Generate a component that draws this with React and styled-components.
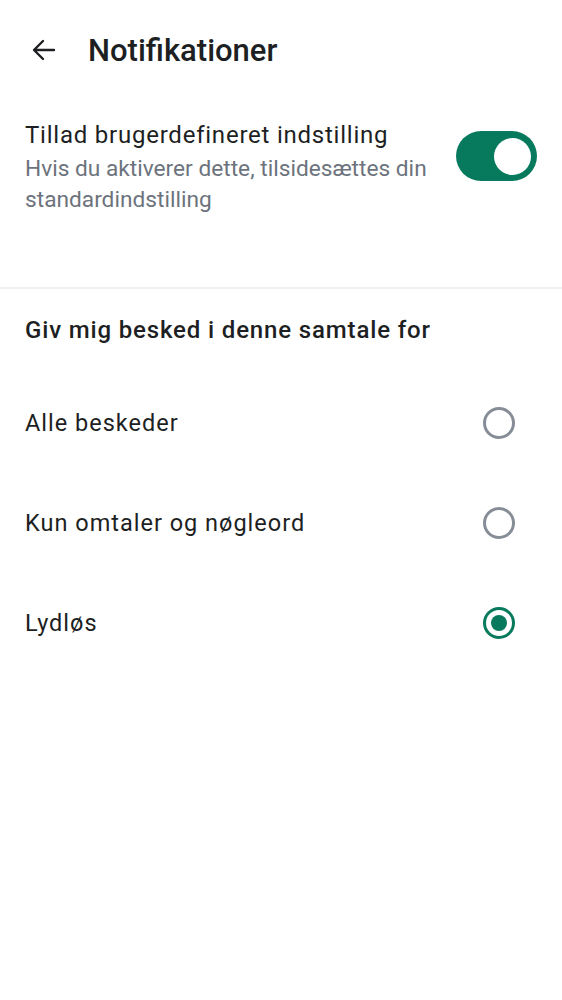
import styled, { createGlobalStyle } from "styled-components";
import { useState } from "react";

const GlobalStyle = createGlobalStyle`
  html, body {
    margin: 0;
    padding: 0;
    background: #fff;
  }
  body {
    font-family: Roboto, "Noto Sans", "Liberation Sans", sans-serif;
    color: #1d1f23;
  }
`;

const Page = styled.div`
  width: 562px;
  min-height: 1000px;
  background: #fff;
`;

const TopBar = styled.header`
  height: 100px;
  display: flex;
  align-items: center;
  padding-left: 30px;
`;

const BackButton = styled.button`
  border: 0;
  background: none;
  padding: 0;
  width: 28px;
  height: 28px;
  display: flex;
  align-items: center;
  justify-content: center;
  color: #1d1f23;
  margin-right: 30px;
`;

const Title = styled.h1`
  margin: 0;
  font-size: 31px;
  font-weight: 500;
  letter-spacing: 0;
`;

const SettingRow = styled.div`
  display: flex;
  align-items: flex-start;
  justify-content: space-between;
  padding: 18px 25px 0 25px;
  height: 187px;
  box-sizing: border-box;
`;

const SettingText = styled.div`
  display: flex;
  flex-direction: column;
  max-width: 420px;
`;

const SettingTitle = styled.div`
  font-size: 24px;
  line-height: 35px;
  letter-spacing: 0.77px;
`;

const SettingDesc = styled.div`
  font-size: 22.7px;
  line-height: 31px;
  color: #6c737d;
`;

const Track = styled.button`
  flex: none;
  margin-top: 13px;
  width: 81px;
  height: 50px;
  border-radius: 25px;
  border: 0;
  padding: 0 6px;
  background: ${(p) => (p.$on ? "#077a5d" : "#b8bec6")};
  display: flex;
  align-items: center;
  justify-content: ${(p) => (p.$on ? "flex-end" : "flex-start")};
`;

const Knob = styled.span`
  width: 37px;
  height: 37px;
  border-radius: 50%;
  background: #fff;
`;

const Divider = styled.hr`
  margin: 0;
  border: 0;
  border-top: 2px solid #eef0f2;
`;

const SectionTitle = styled.h2`
  margin: 0;
  padding: 26px 25px 0;
  height: 84px;
  box-sizing: border-box;
  font-size: 24px;
  font-weight: 500;
  line-height: 30px;
  letter-spacing: 0.85px;
`;

const OptionList = styled.div`
  display: flex;
  flex-direction: column;
`;

const Option = styled.label`
  height: 100px;
  display: flex;
  align-items: center;
  justify-content: space-between;
  padding: 0 47px 0 25px;
  font-size: 23.5px;
  letter-spacing: 1px;
  cursor: pointer;
`;

const Radio = styled.span`
  width: 32px;
  height: 32px;
  box-sizing: border-box;
  border-radius: 50%;
  border: 3px solid ${(p) => (p.$checked ? "#077a5d" : "#878d96")};
  display: flex;
  align-items: center;
  justify-content: center;

  &::after {
    content: "";
    width: 16px;
    height: 16px;
    border-radius: 50%;
    background: #077a5d;
    display: ${(p) => (p.$checked ? "block" : "none")};
  }
`;

const options = ["Alle beskeder", "Kun omtaler og nøgleord", "Lydløs"];

const App = () => {
  const [custom, setCustom] = useState(true);
  const [selected, setSelected] = useState(2);

  return (
    <Page>
      <GlobalStyle />
      <TopBar>
        <BackButton aria-label="Tilbage">
          <svg width="24" height="24" viewBox="0 0 24 24" fill="none">
            <path
              d="M22 12H3M11 3l-9 9 9 9"
              stroke="currentColor"
              strokeWidth="2.4"
              strokeLinecap="round"
              strokeLinejoin="round"
            />
          </svg>
        </BackButton>
        <Title>Notifikationer</Title>
      </TopBar>

      <SettingRow>
        <SettingText>
          <SettingTitle>Tillad brugerdefineret indstilling</SettingTitle>
          <SettingDesc>
            Hvis du aktiverer dette, tilsidesættes din standardindstilling
          </SettingDesc>
        </SettingText>
        <Track $on={custom} onClick={() => setCustom(!custom)}>
          <Knob />
        </Track>
      </SettingRow>

      <Divider />

      <SectionTitle>Giv mig besked i denne samtale for</SectionTitle>
      <OptionList>
        {options.map((label, index) => (
          <Option key={label} onClick={() => setSelected(index)}>
            {label}
            <Radio $checked={selected === index} />
          </Option>
        ))}
      </OptionList>
    </Page>
  );
};

export default App;
